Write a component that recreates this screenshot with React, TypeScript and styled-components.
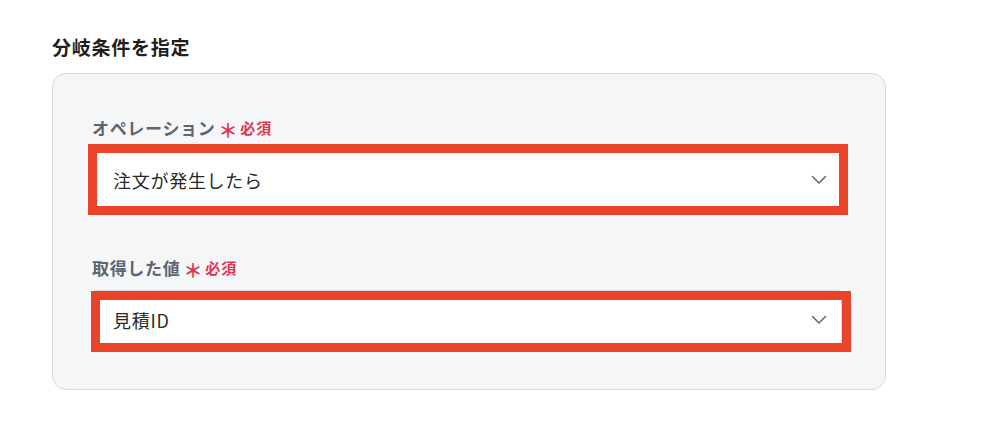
import React from 'react';
import styled, { createGlobalStyle } from 'styled-components';

const GlobalStyle = createGlobalStyle`
  html, body {
    margin: 0;
    padding: 0;
    background: #ffffff;
  }
  body {
    font-family: 'Noto Sans CJK JP', 'Noto Sans', sans-serif;
    color: #222;
  }
`;

const Page = styled.div`
  width: 982px;
  height: 425px;
  box-sizing: border-box;
  padding: 34px 0 0 52px;
`;

const Title = styled.h2`
  margin: 0 0 13px;
  font-size: 19px;
  line-height: 26px;
  font-weight: 600;
  color: #1f1f1f;
  letter-spacing: 0.04em;
`;

const Panel = styled.div`
  width: 834px;
  box-sizing: border-box;
  background: #f5f6f8;
  border: 1px solid #d7dadf;
  border-radius: 14px;
  padding: 42px 43px 39px 39px;
  display: flex;
  flex-direction: column;
  gap: 46px;
`;

const FieldGroup = styled.div`
  display: flex;
  flex-direction: column;
  gap: 10px;
`;

const Label = styled.div`
  display: flex;
  align-items: center;
  gap: 3px;
  font-size: 17px;
  line-height: 24px;
  font-weight: 700;
  color: #5d6570;
  letter-spacing: 0.04em;
`;

const Required = styled.span`
  display: flex;
  align-items: center;
  gap: 2px;
  font-size: 15px;
  font-weight: 700;
  color: #e0344f;
  letter-spacing: 0.06em;
`;

const Asterisk = styled.span`
  font-size: 19px;
  line-height: 14px;
  font-weight: 700;
  position: relative;
  top: 2px;
`;

const SelectWrap = styled.div`
  position: relative;
`;

const Select = styled.div`
  height: 60px;
  box-sizing: border-box;
  background: #ffffff;
  border: 1px solid #d5d8dd;
  border-radius: 4px;
  display: flex;
  align-items: center;
  justify-content: space-between;
  padding: 0 14px 0 20px;
  font-size: 18px;
  letter-spacing: 0.04em;
  color: #2a2a2a;
`;

const Highlight = styled.div<{ $t: number; $r: number; $b: number; $l: number }>`
  position: absolute;
  top: ${({ $t }) => $t}px;
  right: ${({ $r }) => $r}px;
  bottom: ${({ $b }) => $b}px;
  left: ${({ $l }) => $l}px;
  border: 9px solid #e9432a;
  pointer-events: none;
`;

function Chevron() {
  return (
    <svg width="16" height="10" viewBox="0 0 16 10" fill="none">
      <path d="M1.5 1.5 L8 8 L14.5 1.5" stroke="#6b6b6b" strokeWidth="1.6" strokeLinecap="round" strokeLinejoin="round" />
    </svg>
  );
}

type FieldProps = {
  label: string;
  value: string;
  frame: { t: number; r: number; b: number; l: number };
};

function Field({ label, value, frame }: FieldProps) {
  return (
    <FieldGroup>
      <Label>
        {label}
        <Required>
          <Asterisk>＊</Asterisk>必須
        </Required>
      </Label>
      <SelectWrap>
        <Select>
          <span>{value}</span>
          <Chevron />
        </Select>
        <Highlight $t={frame.t} $r={frame.r} $b={frame.b} $l={frame.l} />
      </SelectWrap>
    </FieldGroup>
  );
}

export default function App() {
  return (
    <>
      <GlobalStyle />
      <Page>
        <Title>分岐条件を指定</Title>
        <Panel>
          <Field label="オペレーション" value="注文が発生したら" frame={{ t: -6, r: -6, b: -5, l: -4 }} />
          <Field label="取得した値" value="見積ID" frame={{ t: 1, r: -9, b: -2, l: -1 }} />
        </Panel>
      </Page>
    </>
  );
}
